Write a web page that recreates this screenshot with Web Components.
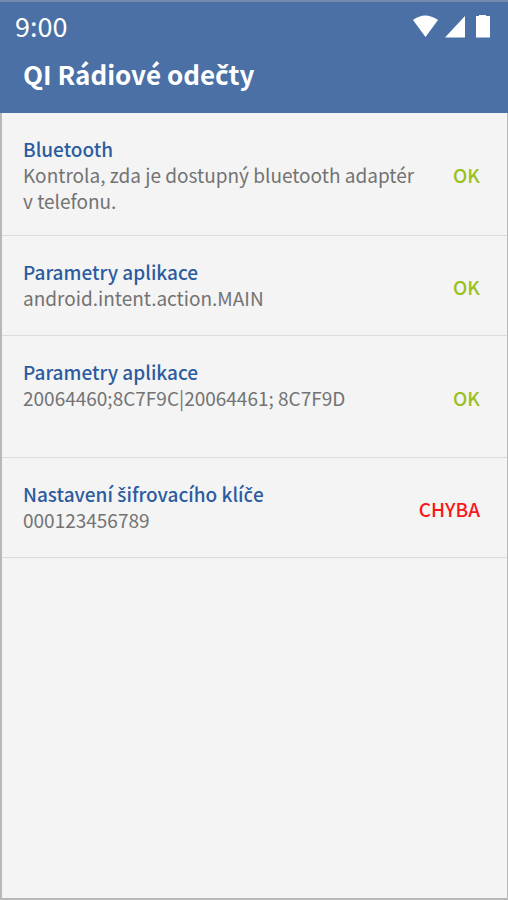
<!DOCTYPE html>
<html lang="cs">
<head>
<meta charset="utf-8">
<meta name="viewport" content="width=device-width, initial-scale=1">
<title>QI Rádiové odečty</title>
<style>
  body { margin: 0; font-family: "Noto Sans CJK SC", "Noto Sans", sans-serif; background: #f4f4f4; }
  /* Letters with a caron, which the CJK family lacks */
  i { font-family: "Noto Sans", sans-serif; font-style: normal; line-height: 1; }
</style>
</head>
<body>
<qi-screen>
  <qi-status-bar slot="header" time="9:00"></qi-status-bar>
  <qi-title slot="header">QI Rádiové ode<i>č</i>ty</qi-title>
  <qi-check state="ok"><span slot="name">Bluetooth</span>Kontrola, zda je dostupný bluetooth adaptér v&nbsp;telefonu.<span slot="result">OK</span></qi-check>
  <qi-check state="ok"><span slot="name">Parametry aplikace</span>android.intent.action.MAIN<span slot="result">OK</span></qi-check>
  <qi-check state="ok" tall><span slot="name">Parametry aplikace</span>20064460;8C7F9C|20064461; 8C7F9D<span slot="result">OK</span></qi-check>
  <qi-check state="error"><span slot="name">Nastavení <i>š</i>ifrovacího klí<i>č</i>e</span>000123456789<span slot="result">CHYBA</span></qi-check>
</qi-screen>
<script>
  const define = (name, html) => customElements.define(name, class extends HTMLElement {
    constructor() {
      super();
      const template = document.createElement('template');
      template.innerHTML = html;
      this.attachShadow({ mode: 'open' }).append(template.content.cloneNode(true));
    }
    connectedCallback() {
      const time = this.shadowRoot.querySelector('time');
      if (time) time.textContent = this.getAttribute('time');
    }
  });

  define('qi-status-bar', `
    <style>
      :host { display: flex; align-items: center; justify-content: space-between; padding: 6px 16px 0 15px; color: #fff; font-size: 27px; line-height: 36px; }
      svg { display: block; width: 80px; height: 26px; fill: currentColor; }
    </style>
    <time></time>
    <svg viewBox="0 0 80 26" role="img" aria-label="Wi-Fi, signál, baterie">
      <path d="M1 7Q13-2 26 7L13.500 24Z"/>
      <path d="M33 24.500L53 3V24.500Z"/>
      <path d="M64 3H67V2H74V3H78V24.500H64Z"/>
    </svg>`);

  define('qi-title', `
    <style>
      :host { display: block; padding: 11px 24px 20px 23px; color: #fff; }
      h1 { margin: 0; font-size: 26px; line-height: 38px; font-weight: 700; }
    </style>
    <h1><slot></slot></h1>`);

  define('qi-check', `
    <style>
      :host { display: flex; align-items: center; gap: 24px; box-sizing: border-box; min-height: 100px; padding: 23px 27px 21px 21px; border-bottom: 1px solid #dcdcdc; font-size: 19px; line-height: 26px; }
      :host([tall]) { min-height: 122px; }
      .text { flex: 1; align-self: flex-start; min-width: 0; }
      h2, p { margin: 0; font-size: inherit; }
      h2 { color: #2c5c9f; font-weight: 500; }
      p { color: #737373; font-weight: 400; }
      strong { font-weight: 500; color: #9abf1c; }
      :host([state="error"]) strong { color: #f9161b; }
    </style>
    <div class="text"><h2><slot name="name"></slot></h2><p><slot></slot></p></div>
    <strong><slot name="result"></slot></strong>`);

  define('qi-screen', `
    <style>
      :host { display: flex; flex-direction: column; min-height: 100vh; box-sizing: border-box; }
      header { background: #4a70a6; border-top: 2px solid #7189ac; }
      main { flex: 1; border: solid #b8b8b8; border-width: 0 1px 2px 2px; }
    </style>
    <header><slot name="header"></slot></header>
    <main><slot></slot></main>`);
</script>
</body>
</html>
